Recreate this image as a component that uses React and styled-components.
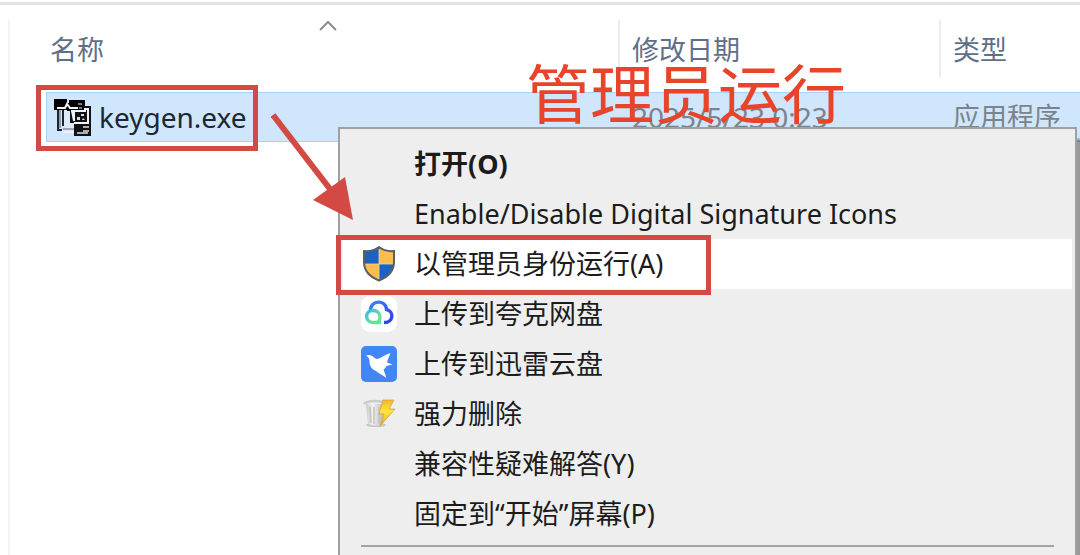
import { useState } from "react";
import styled, { createGlobalStyle } from "styled-components";

const ACCENT = "#d34a44";

const KeygenIcon = () => (
  <svg width="37" height="37" viewBox="0 0 37 37" aria-hidden="true">
    <path d="M8 10h13v19H8z" fill="#dcebf8" />
    <path d="M4 10v21h4M9 11v16" fill="none" stroke="#20252b" strokeWidth="2" />
    <path d="M6 11v18" stroke="#8fa0ae" strokeWidth="2" />
    <path d="M9 30h12" stroke="#a4a2b4" strokeWidth="2" />
    <path d="M9 33h12" stroke="#f3eff8" strokeWidth="2" />
    <path d="M0 0h13v4h2V1h16v11H13v-1H0z" fill="#000" />
    <path d="M3 9h8l2-4 3 4h8" fill="none" stroke="#eef4fa" strokeWidth="2" />
    <path d="M24 5h4M25 9h3" stroke="#9aa3ac" strokeWidth="1.500" />
    <path d="M30 7h7v30H20V24h-4V12h14z" fill="#101214" />
    <path d="M17 12h14v-2h3v14H20" fill="none" stroke="#f1f5f9" strokeWidth="2" />
    <path d="M17 12h4v10h-2z" fill="#f1f5f9" />
    <path d="M23 18h3v3h-3zM27 15h3v2h-3zM29 19l2 2h-3z" fill="#d5dbe1" />
    <path d="M29 28h6M29 32h6M23 34h11" stroke="#dce2e8" strokeWidth="1.500" />
  </svg>
);

const ShieldIcon = () => (
  <svg width="36" height="36" viewBox="0 0 36 36" aria-hidden="true">
    <clipPath id="shield">
      <path d="M18 1C14 4 8 5.500 3 5V16C3 24.500 9 31 18 34.500 27 31 33 24.500 33 16V5C28 5.500 22 4 18 1z" />
    </clipPath>
    <g clipPath="url(#shield)">
      <path d="M0 0h18v18H0z" fill="#1c62c4" />
      <path d="M18 0h18v18H18z" fill="#fdbd4c" />
      <path d="M0 18h18v18H0z" fill="#fdbd4c" />
      <path d="M18 18h18v18H18z" fill="#1c62c4" />
      <path d="M18 0v36M0 18h36" stroke="#e9d9a5" strokeWidth="0.800" />
    </g>
    <path
      d="M18 1C14 4 8 5.500 3 5V16C3 24.500 9 31 18 34.500 27 31 33 24.500 33 16V5C28 5.500 22 4 18 1z"
      fill="none"
      stroke="#5a5f64"
      strokeWidth="2"
    />
  </svg>
);

const CloudIcon = () => (
  <svg width="36" height="36" viewBox="0 0 36 36" aria-hidden="true">
    <defs>
      <linearGradient id="ring" x1="0" y1="0" x2="1" y2="1">
        <stop offset="0" stopColor="#35b8ee" />
        <stop offset="0.600" stopColor="#66e0a4" />
        <stop offset="1" stopColor="#5fe88c" />
      </linearGradient>
      <linearGradient id="cloud" x1="0" y1="0" x2="1" y2="1">
        <stop offset="0" stopColor="#3f83f6" />
        <stop offset="1" stopColor="#2d3fee" />
      </linearGradient>
    </defs>
    <rect width="36" height="36" rx="9" fill="#fff" />
    <path
      d="M9.500 14.500C9 4 25 3 25.500 13.500 33 15 33 26.500 23 26.500"
      fill="none"
      stroke="url(#cloud)"
      strokeWidth="3.400"
    />
    <path
      d="M20 26.500H12C3.500 26.500 3.500 14.500 12 14.500c7 0 9 8 4.500 12"
      fill="none"
      stroke="url(#ring)"
      strokeWidth="3.400"
    />
  </svg>
);

const BirdIcon = () => (
  <svg width="36" height="36" viewBox="0 0 36 36" aria-hidden="true">
    <rect width="36" height="36" rx="5" fill="#4285f4" />
    <path
      d="M5 9.500c2.500-1 5-.500 7 1 1.500 1.500 2.500 2.500 4.500 2.500C20 11.500 25 8.500 29.500 7c-1.500 4-3 7-3.500 9.500l5.500 2-6 1.500c-1 2-2 3-3 3.500L25.500 32c-4-3-8-4.500-10.500-7-4-1.500-6.500-5-6.500-9.500C8.500 12.500 7.500 11 5 9.500z"
      fill="#fff"
    />
  </svg>
);

const ShredIcon = () => (
  <svg width="36" height="36" viewBox="0 0 36 36" aria-hidden="true">
    <defs>
      <linearGradient id="bin" x1="0" x2="1">
        <stop offset="0" stopColor="#c9cac8" />
        <stop offset="0.350" stopColor="#f1f1ef" />
        <stop offset="1" stopColor="#b5b7b6" />
      </linearGradient>
      <linearGradient id="bolt" x1="0" y1="0" x2="0" y2="1">
        <stop offset="0" stopColor="#f3b52c" />
        <stop offset="0.450" stopColor="#ffe83b" />
        <stop offset="1" stopColor="#e99d28" />
      </linearGradient>
    </defs>
    <ellipse cx="15" cy="29" rx="10" ry="2" fill="#c5c5c3" />
    <path d="M5 8l2 20c4 2 11 2 15 0l2-20z" fill="url(#bin)" />
    <path d="M9 11l1 16M13 11v17M18 11v17M22 11l-2 16" stroke="#c0c3c3" strokeWidth="1.500" />
    <path d="M3 8C6 4 21 4 25 8" fill="none" stroke="#cbccca" strokeWidth="2.500" />
    <path
      d="M22 4h11l-5 9h6L19 30l4-12h-5z"
      fill="url(#bolt)"
      stroke="#dca33a"
      strokeWidth="0.800"
    />
  </svg>
);

const menuItems = [
  { label: "打开(O)", bold: true },
  { label: "Enable/Disable Digital Signature Icons" },
  { label: "以管理员身份运行(A)", icon: <ShieldIcon />, active: true, marked: true },
  { label: "上传到夸克网盘", icon: <CloudIcon /> },
  { label: "上传到迅雷云盘", icon: <BirdIcon /> },
  { label: "强力删除", icon: <ShredIcon /> },
  { label: "兼容性疑难解答(Y)" },
  { label: "固定到“开始”屏幕(P)" },
];

const App = () => {
  const [ascending, setAscending] = useState(true);

  return (
    <Page>
      <GlobalStyle />
      <Pane>
        <FileTable>
          <colgroup>
            <NameColumn />
            <DateColumn />
            <col />
          </colgroup>
          <thead>
            <tr>
              <HeadCell aria-sort={ascending ? "ascending" : "descending"}>
                <HeadButton $first onClick={() => setAscending(!ascending)}>
                  <SortArrow viewBox="0 0 18 10" $flipped={!ascending}>
                    <path d="M1 9l8-8 8 8" />
                  </SortArrow>
                  名称
                </HeadButton>
              </HeadCell>
              <HeadCell>
                <HeadButton>修改日期</HeadButton>
              </HeadCell>
              <HeadCell>
                <HeadButton>类型</HeadButton>
              </HeadCell>
            </tr>
          </thead>
          <tbody>
            <FileRow>
              <NameCell>
                <FileName>
                  <KeygenIcon />
                  keygen.exe
                </FileName>
                <FileMark />
              </NameCell>
              <DateCell>2025/5/23 0:23</DateCell>
              <FileCell>应用程序</FileCell>
            </FileRow>
          </tbody>
        </FileTable>
      </Pane>

      <Menu role="menu">
        {menuItems.map(({ label, icon, bold, active, marked }) => (
          <MenuItem key={label} role="menuitem" $bold={bold} $active={active}>
            <IconSlot>{icon}</IconSlot>
            {label}
            {marked && <ItemMark />}
          </MenuItem>
        ))}
        <Separator />
      </Menu>

      <Arrow viewBox="0 0 84 108" aria-hidden="true">
        <path d="M2 3l57 74" />
        <polygon points="74,65 82,108 42,88" />
      </Arrow>
      <Caption>管理员运行</Caption>
    </Page>
  );
};

const GlobalStyle = createGlobalStyle`
  * {
    box-sizing: border-box;
  }

  body {
    margin: 0;
    background: #fff;
    font-family: "Noto Sans", "Noto Sans CJK SC", sans-serif;
    font-size: 27px;
    color: #1c1c1c;
  }

  button {
    border: none;
    background: none;
    font: inherit;
    color: inherit;
    text-align: left;
  }
`;

const Page = styled.main`
  position: relative;
  display: flex;
  flex-direction: column;
  height: 100vh;
  overflow: hidden;
  border-top: 2px solid #fff;

  &::before {
    content: "";
    border-top: 3px solid #e2e2e2;
  }
`;

const Pane = styled.section`
  flex: 1;
  margin: 15px 0 0 8px;
  padding-left: 36px;
  border-left: 2px solid #f4f4f4;
`;

const FileTable = styled.table`
  width: 100%;
  table-layout: fixed;
  border-collapse: separate;
  border-spacing: 0;
`;

const NameColumn = styled.col`
  width: 572px;
`;

const DateColumn = styled.col`
  width: 321px;
`;

const HeadCell = styled.th`
  padding: 0 0 15px;
  font-weight: 400;
`;

const HeadButton = styled.button`
  display: flex;
  flex-direction: column;
  justify-content: flex-end;
  width: 100%;
  height: 57px;
  padding: 0 12px 8px ${({ $first }) => ($first ? "4px" : "12px")};
  border-left: ${({ $first }) => ($first ? "none" : "2px solid #ececec")};
  line-height: 38px;
  font-size: 27px;
  color: #5f6f88;
`;

const SortArrow = styled.svg`
  align-self: center;
  width: 18px;
  height: 10px;
  fill: none;
  stroke: #8c8c8c;
  stroke-width: 2;
  transform: ${({ $flipped }) => ($flipped ? "rotate(180deg)" : "none")};
`;

const FileRow = styled.tr`
  background: #cfe6fd;
`;

const FileCell = styled.td`
  height: 50px;
  padding: 0 0 0 14px;
  border: 1px solid #a6d3fb;
  border-width: 1px 0;
  line-height: 40px;
  white-space: nowrap;
  color: #7c838a;
`;

const DateCell = styled(FileCell)`
  font-size: 28px;
`;

const NameCell = styled(FileCell)`
  position: relative;
  padding-left: 7px;
  border-left-width: 1px;
  font-size: 28px;
  color: #1d2733;
`;

const FileName = styled.div`
  display: flex;
  align-items: center;
  gap: 8px;
`;

const FileMark = styled.span`
  position: absolute;
  top: -8px;
  left: -11px;
  width: 222px;
  height: 66px;
  border: 5px solid ${ACCENT};
`;

const Menu = styled.div`
  position: absolute;
  top: 125px;
  left: 338px;
  right: 3px;
  padding: 10px 3px 30px;
  border: 2px solid #a0a0a0;
  background: #eee;
  box-shadow: 8px 12px 2px rgba(0, 0, 0, 0.4);
`;

const MenuItem = styled.button`
  position: relative;
  display: flex;
  align-items: center;
  gap: 17px;
  width: 100%;
  height: 50px;
  padding: 0 18px;
  background: ${({ $active }) => ($active ? "#fff" : "transparent")};
  font-weight: ${({ $bold }) => ($bold ? 700 : 400)};
  line-height: 40px;
  white-space: nowrap;
`;

const IconSlot = styled.span`
  display: flex;
  flex: none;
  width: 36px;
`;

const ItemMark = styled.span`
  position: absolute;
  top: -4px;
  left: -7px;
  width: 375px;
  height: 60px;
  border: 5px solid ${ACCENT};
`;

const Separator = styled.hr`
  margin: 6px 18px;
  border: none;
  border-top: 2px solid #a3a3a3;
`;

const Arrow = styled.svg`
  position: absolute;
  top: 110px;
  left: 271px;
  width: 84px;
  height: 108px;
  fill: ${ACCENT};

  path {
    fill: none;
    stroke: ${ACCENT};
    stroke-width: 6;
  }
`;

const Caption = styled.p`
  position: absolute;
  top: 47px;
  left: 526px;
  margin: 0;
  font-size: 64px;
  line-height: 90px;
  white-space: nowrap;
  color: #e8432b;
`;

export default App;
